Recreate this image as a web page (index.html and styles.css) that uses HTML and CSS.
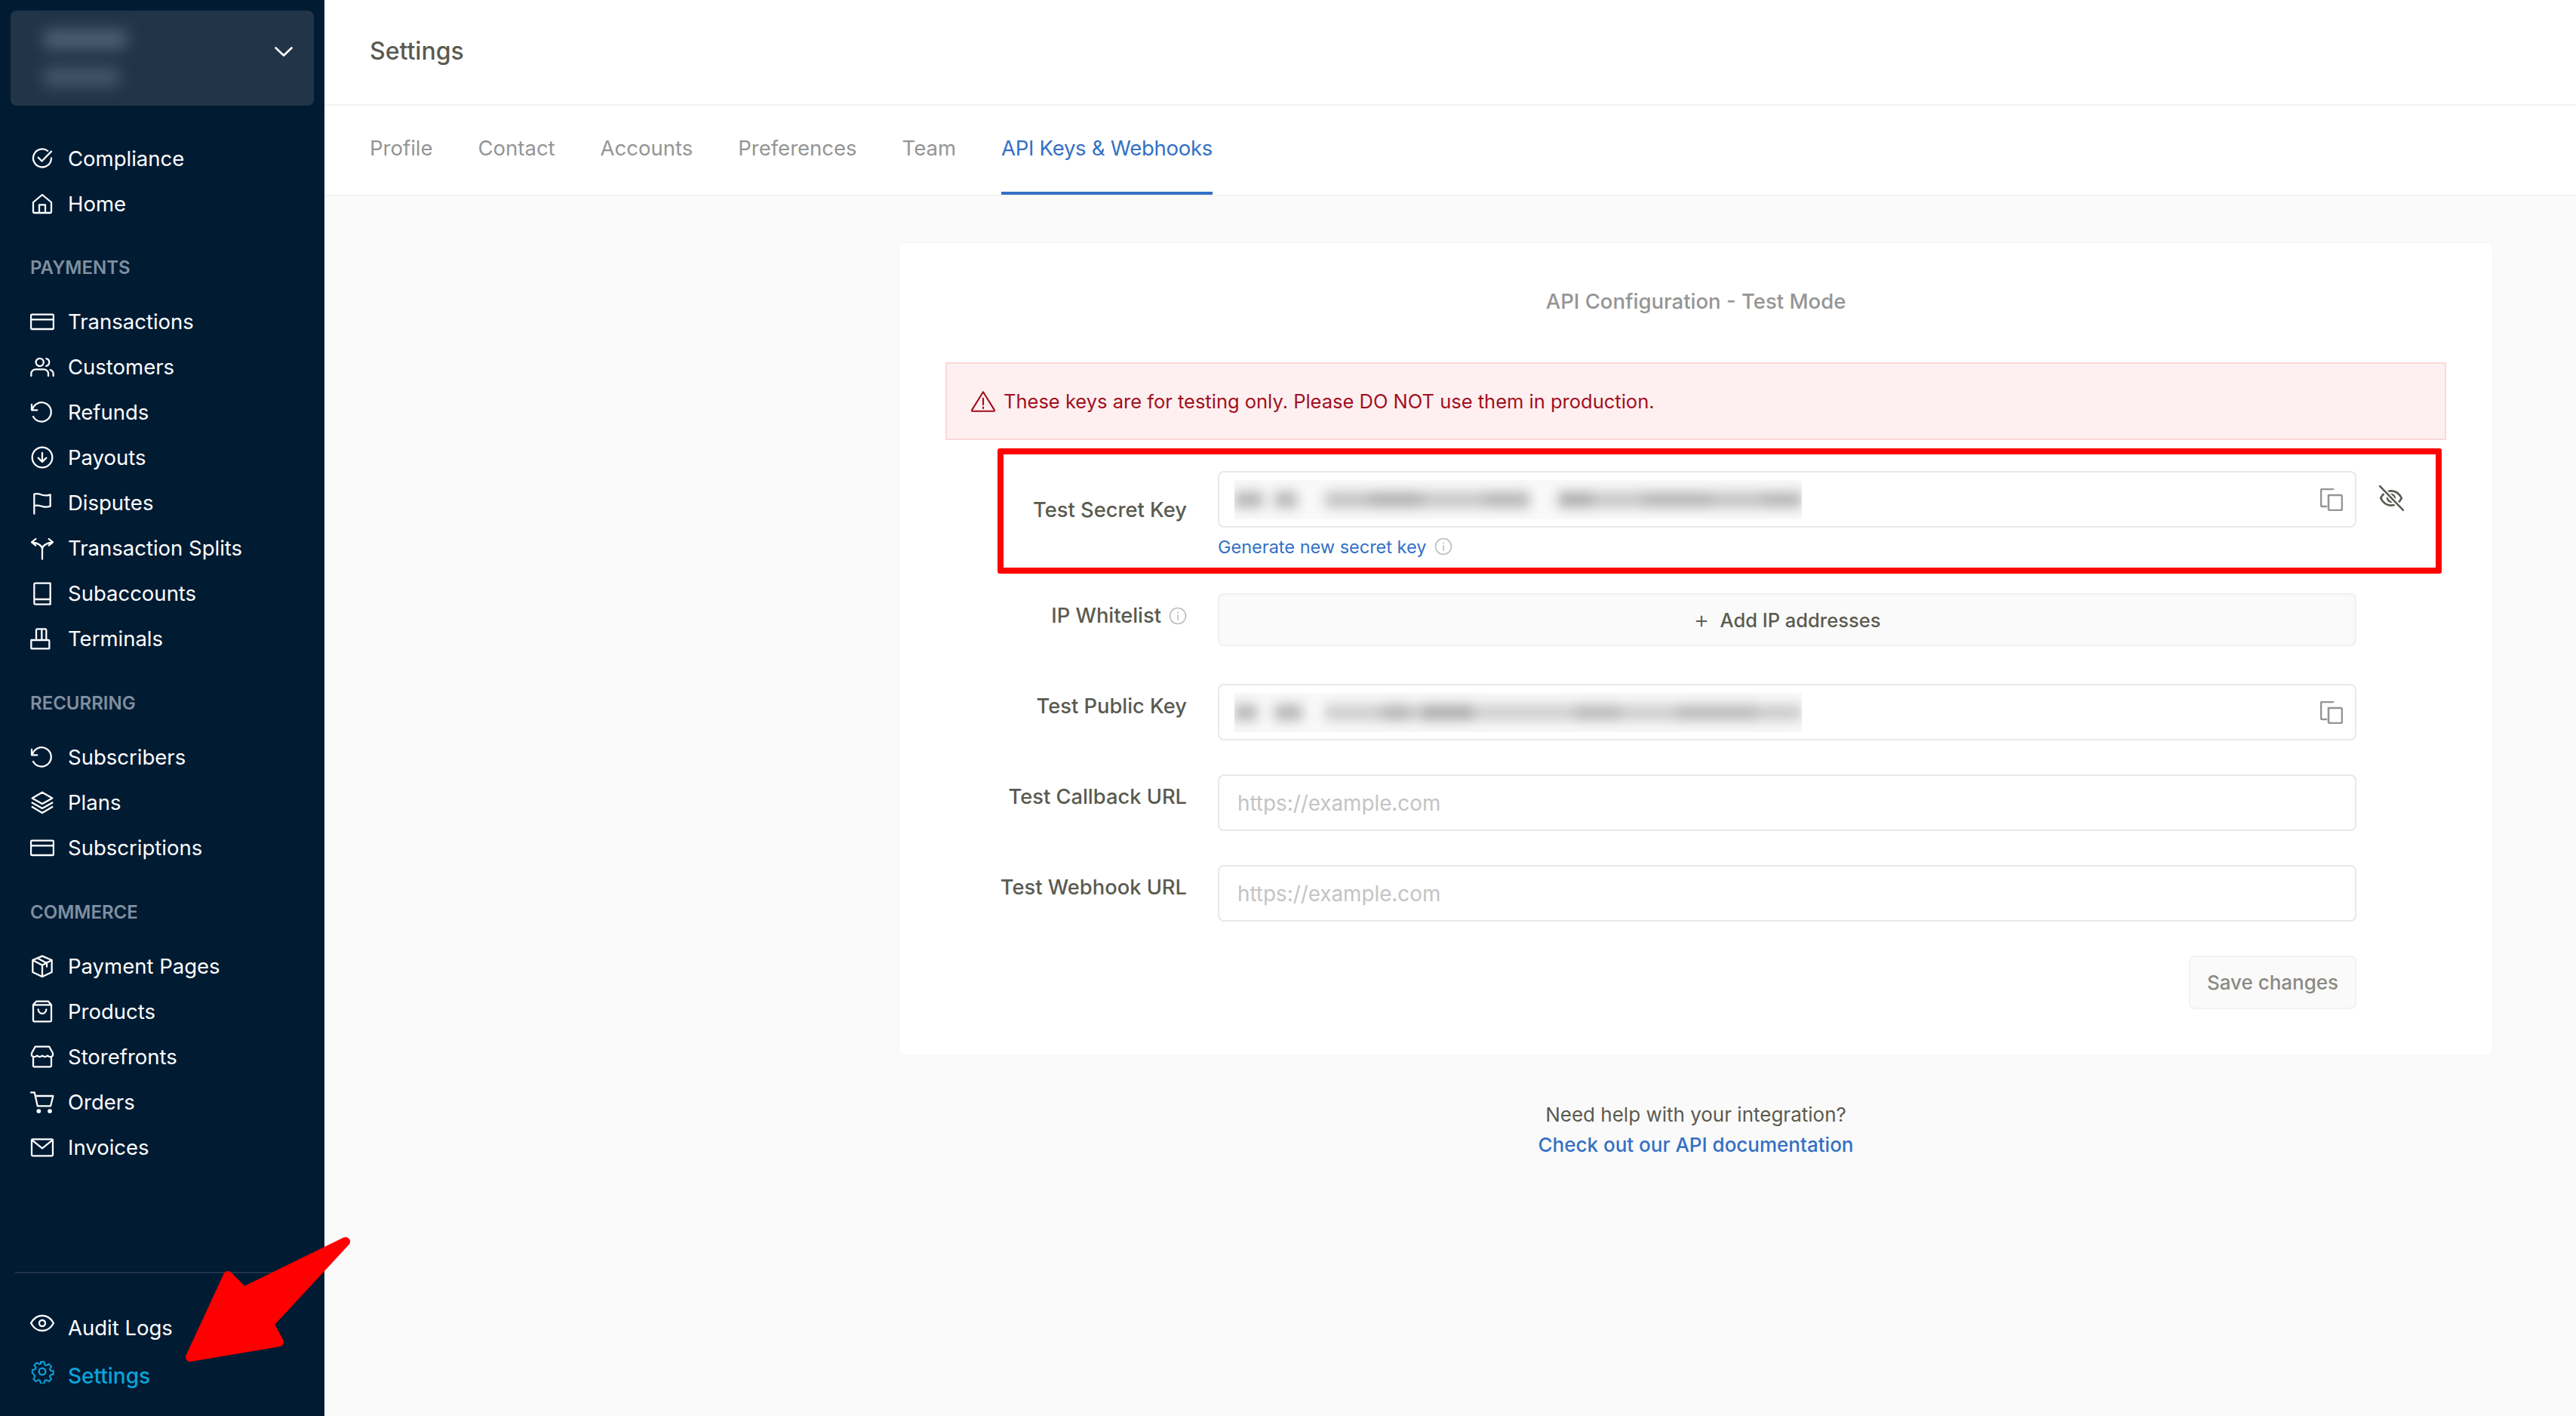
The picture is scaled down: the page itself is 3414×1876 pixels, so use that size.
FILE: index.html
```html
<!DOCTYPE html>
<html lang="en">
<head>
<meta charset="utf-8">
<title>Settings</title>
<link rel="stylesheet" href="styles.css">
</head>
<body>
<div class="app">
  <aside class="sidebar">
    <div class="switcher">
      <div class="switcher-blur"><span class="sb sb-a"></span><span class="sb sb-b"></span></div>
      <svg class="chev" viewBox="0 0 24 14"><path d="M1.5 1.5 12 11.5 22.5 1.5"/></svg>
    </div>
    <nav class="nav nav-first">
      <a class="item"><svg class="ico" viewBox="0 0 24 24"><path d="M21 11.6a9 9 0 1 1-3.6-7.2M8 11l3.6 3.6L21 5"/></svg>Compliance</a>
      <a class="item"><svg class="ico" viewBox="0 0 24 24"><path d="M3 10.5 12 3l9 7.5V20a1 1 0 0 1-1 1H4a1 1 0 0 1-1-1zM9 21v-8h6v8"/></svg>Home</a>
    </nav>
    <div class="section">PAYMENTS</div>
    <nav class="nav">
      <a class="item"><svg class="ico" viewBox="0 0 24 24"><rect x="0.8" y="5" width="22.4" height="14.500" rx="1"/><path d="M1 10h22"/></svg>Transactions</a>
      <a class="item"><svg class="ico" viewBox="0 0 24 24"><circle cx="9.500" cy="7.500" r="3.800"/><path d="M1 21v-2c0-2.600 2-4.500 4.500-4.500h8c2.500 0 4.500 1.900 4.500 4.500v2M16 3.800a3.800 3.800 0 0 1 0 7.400M20 15c1.800.6 3 2.200 3 4.200V21"/></svg>Customers</a>
      <a class="item"><svg class="ico" viewBox="0 0 24 24"><path d="M1.500 4.500v5.500h5.500M2 10a9.500 9.500 0 1 1 1 6.500"/></svg>Refunds</a>
      <a class="item"><svg class="ico" viewBox="0 0 24 24"><circle cx="12" cy="12" r="10"/><path d="M12 7.500v9M8 12.500l4 4 4-4"/></svg>Payouts</a>
      <a class="item"><svg class="ico" viewBox="0 0 24 24"><path d="M4 23V3.500c3-1 5.500 0 8 .8s5 .8 8-.3v11.500c-3 1.100-5.500 1-8 .2s-5-1.700-8-.7"/></svg>Disputes</a>
      <a class="item"><svg class="ico" viewBox="0 0 24 24"><path d="M12 23V13c0-3-4-6-9.500-6.500M12 13c0-3 4-6 9.500-6.500M5.500 3 1.500 6.300l4 3.200M18.500 3l4 3.300-4 3.200"/></svg>Transaction Splits</a>
      <a class="item"><svg class="ico" viewBox="0 0 24 24"><path d="M4 19.500V3a1 1 0 0 1 1-1h15v21H5a1 1 0 0 1-1-1zm0-1.500h16"/></svg>Subaccounts</a>
      <a class="item"><svg class="ico" viewBox="0 0 24 24"><path d="M1 13.500h17a1 1 0 0 1 1 1V22H1.500a.5.5 0 0 1-.5-.5v-7a1 1 0 0 1 1-1M6 13.500V3.500a1 1 0 0 1 1-1h8a1 1 0 0 1 1 1v10M11.500 2.500v11"/></svg>Terminals</a>
    </nav>
    <div class="section">RECURRING</div>
    <nav class="nav">
      <a class="item"><svg class="ico" viewBox="0 0 24 24"><path d="M1.500 4.500v5.500h5.500M2 10a9.500 9.500 0 1 1 1 6.500"/></svg>Subscribers</a>
      <a class="item"><svg class="ico" viewBox="0 0 24 24"><path d="M12 2 2 7.800l10 5.700 10-5.700zM2 12.300l10 5.700 10-5.700M2 16.500 12 22.500l10-6"/></svg>Plans</a>
      <a class="item"><svg class="ico" viewBox="0 0 24 24"><rect x="0.800" y="5" width="22.400" height="14.500" rx="1"/><path d="M1 10h22"/></svg>Subscriptions</a>
    </nav>
    <div class="section">COMMERCE</div>
    <nav class="nav">
      <a class="item"><svg class="ico" viewBox="0 0 24 24"><path d="M12 2 2.500 6v12L12 22.500l9.500-4.500V6zM2.500 6 12 11l9.500-5M12 11v11.500M7 4l9.500 5v3.500"/></svg>Payment Pages</a>
      <a class="item"><svg class="ico" viewBox="0 0 24 24"><path d="M6 2h12l3 3.500V21a1 1 0 0 1-1 1H4a1 1 0 0 1-1-1V5.500zM3 5.500h18M8 10c.5 5.500 7.500 5.500 8 0"/></svg>Products</a>
      <a class="item"><svg class="ico" viewBox="0 0 24 24"><path d="M5 2h14l3.500 6.500V11c-1.800 1.500-3.500 1.500-5.300 0-1.800 1.500-3.500 1.500-5.200 0-1.800 1.500-3.500 1.500-5.200 0-1.800 1.500-3.500 1.500-5.300 0V8.500zM3 12.500V21a1 1 0 0 0 1 1h16a1 1 0 0 0 1-1v-8.500"/></svg>Storefronts</a>
      <a class="item"><svg class="ico" viewBox="0 0 24 24"><path d="M.8 2.500h3.500l3 13.500h13l2.500-10H5.200"/><circle cx="8.500" cy="21" r="1.300" class="dot"/><circle cx="19.500" cy="21" r="1.300" class="dot"/></svg>Orders</a>
      <a class="item"><svg class="ico" viewBox="0 0 24 24"><rect x="1.500" y="4" width="21" height="16.500" rx="1"/><path d="m2 5 10 8 10-8"/></svg>Invoices</a>
    </nav>
    <div class="foot">
      <a class="item item-foot"><svg class="ico ico-up" viewBox="0 0 24 24"><path d="M.8 12C3.500 7 7.500 4.500 12 4.500S20.500 7 23.200 12c-2.700 5-6.700 7.500-11.200 7.500S3.500 17 .8 12z"/><circle cx="12" cy="12" r="3"/></svg>Audit Logs</a>
      <a class="item item-foot item-active"><svg class="ico ico-up" viewBox="0 0 24 24"><circle cx="12" cy="12" r="3.300"/><path d="M10 1h4l.7 3.300 1.700.8 3-1.700 2.800 2.800-1.800 2.900.8 1.800 3.300.7v3.600l-3.300.8-.8 1.700 1.800 2.900-2.800 2.800-3-1.800-1.700.8-.7 3.300h-4l-.7-3.300-1.700-.8-3 1.800-2.800-2.800 1.800-2.900-.8-1.700L.500 13.800v-3.600l3.300-.7.8-1.800-1.800-2.900 2.800-2.800 3 1.700 1.700-.8z" transform="translate(1.700 1.600) scale(.87)"/></svg>Settings</a>
    </div>
  </aside>

  <main class="main">
    <header class="topbar">Settings</header>
    <div class="tabs">
      <a class="tab">Profile</a>
      <a class="tab">Contact</a>
      <a class="tab">Accounts</a>
      <a class="tab">Preferences</a>
      <a class="tab">Team</a>
      <a class="tab tab-active">API Keys &amp; Webhooks</a>
    </div>
    <div class="content">
      <section class="card">
        <h2 class="card-title">API Configuration - Test Mode</h2>
        <div class="alert">
          <svg class="alert-ico" viewBox="0 0 32 28"><path d="M16 2 2 24.500a1 1 0 0 0 1 1.500h26a1 1 0 0 0 1-1.500zM16 10v8M16 21v1.500"/></svg>
          <span>These keys are for testing only. Please DO NOT use them in production.</span>
        </div>
        <div class="row">
          <label class="label label-low">Test Secret Key</label>
          <div>
            <div class="field">
              <div class="key"><div class="ink ink-secret"></div></div>
              <svg class="copy" viewBox="0 0 30 30"><path d="M8 24H3a2 2 0 0 1-2-2V3a2 2 0 0 1 2-2h14M11 9h16a2 2 0 0 1 2 2v16a2 2 0 0 1-2 2H13a2 2 0 0 1-2-2z"/></svg>
            </div>
            <div class="gen"><a class="gen-link">Generate new secret key</a><svg class="info" viewBox="0 0 24 24"><circle cx="12" cy="12" r="10.500"/><path d="M12 11v6.500M12 7v1"/></svg></div>
          </div>
          <svg class="eye-off" viewBox="0 0 32 32"><path d="M3 16c3-6 8-9 13-9s10 3 13 9c-3 6-8 9-13 9S6 22 3 16z"/><circle cx="16" cy="16" r="4.500"/><path d="M2 1l29 30" class="halo"/><path d="M2 1l29 30" class="slash"/></svg>
        </div>
        <div class="row row-ip">
          <label class="label">IP Whitelist<svg class="info info-label" viewBox="0 0 24 24"><circle cx="12" cy="12" r="10.500"/><path d="M12 11v6.500M12 7v1"/></svg></label>
          <div class="field field-add"><span class="plus">+</span>Add IP addresses</div>
        </div>
        <div class="row">
          <label class="label">Test Public Key</label>
          <div class="field">
            <div class="key"><div class="ink ink-public"></div></div>
            <svg class="copy" viewBox="0 0 30 30"><path d="M8 24H3a2 2 0 0 1-2-2V3a2 2 0 0 1 2-2h14M11 9h16a2 2 0 0 1 2 2v16a2 2 0 0 1-2 2H13a2 2 0 0 1-2-2z"/></svg>
          </div>
        </div>
        <div class="row">
          <label class="label">Test Callback URL</label>
          <div class="field field-url">https://example.com</div>
        </div>
        <div class="row row-last">
          <label class="label">Test Webhook URL</label>
          <div class="field field-url">https://example.com</div>
        </div>
        <div class="row row-save">
          <span></span>
          <button class="save">Save changes</button>
        </div>
      </section>
      <div class="help">
        <p class="help-q">Need help with your integration?</p>
        <a class="help-link">Check out our API documentation</a>
      </div>
    </div>
  </main>
</div>
<div class="redbox"></div>
<svg class="arrow" viewBox="0 0 240 190"><path d="M12 166 62 58 83 79 218 13 117 122 130 146z"/></svg>
</body>
</html>
```
FILE: styles.css
```css
* { box-sizing: border-box; }
html, body { margin: 0; height: 100%; }
body { font-family: Inter, "Liberation Sans", sans-serif; color: #5a5a50; background: #fafafa; position: relative; overflow: hidden; }
a { text-decoration: none; display: block; }

.app { display: flex; height: 1876px; }

.sidebar { width: 430px; flex: none; background: #011b33; display: flex; flex-direction: column; color: #fff; }
.switcher { margin: 14px 14px 0; height: 126px; background: #213448; border-radius: 8px; display: flex; align-items: center; justify-content: flex-end; padding: 0 28px 16px 0; position: relative; overflow: hidden; }
.switcher-blur { position: absolute; left: 20px; top: 12px; width: 170px; height: 100px; filter: blur(10px); display: flex; flex-direction: column; gap: 26px; padding: 14px 0 0 24px; }
.sb { display: block; height: 24px; background: #506375; }
.sb-a { width: 110px; }
.sb-b { width: 100px; background: #46596c; }
.chev { width: 24px; height: 14px; fill: none; stroke: #fff; stroke-width: 2.6; stroke-linecap: round; stroke-linejoin: round; }

.nav { display: flex; flex-direction: column; padding-left: 40px; }
.nav-first { margin-top: 40px; }
.item { height: 60px; display: flex; align-items: center; gap: 18px; font-size: 27.5px; color: #fff; }
.ico { width: 32px; height: 32px; flex: none; fill: none; stroke: currentColor; stroke-width: 1.7; stroke-linecap: round; stroke-linejoin: round; }
.dot { fill: currentColor; }
.section { margin: 40px 0 26px 40px; height: 30px; line-height: 30px; font-size: 24px; font-weight: 600; color: #7f8f9f; }
.section + .nav + .section { margin-top: 41px; }

.foot { margin: auto 20px 0; border-top: 2px solid #213448; padding: 40px 0 21px 20px; }
.item-foot { height: 64px; }
.ico-up { margin-top: -12px; }
.item-active { color: #0ba4db; font-weight: 500; font-size: 28px; }

.main { flex: 1; display: flex; flex-direction: column; min-width: 0; }
.topbar { height: 140px; background: #fff; border-bottom: 2px solid #f4f4f4; padding: 48px 0 0 60px; font-size: 32px; line-height: 40px; font-weight: 500; }
.tabs { height: 120px; background: #fff; border-bottom: 2px solid #f4f4f4; display: flex; gap: 60px; padding-left: 60px; }
.tab { height: 118px; padding-top: 37px; font-size: 27.5px; line-height: 38px; color: #959595; }
.tab-active { color: #3470c5; border-bottom: 4px solid #3470c5; letter-spacing: -0.27px; }

.content { flex: 1; padding: 62px 111px 0 762px; background: #fafafa; }
.card { background: #fff; border-radius: 8px; box-shadow: 0 0 4px rgba(0, 0, 0, .03); padding: 58px 61px 61px; }
.card-title { margin: 0 0 62px; text-align: center; font-size: 27.5px; line-height: 38px; font-weight: 500; color: #959595; }
.alert { height: 103px; background: #fef0f0; border: 2px solid #fdd8d8; padding-left: 31px; display: flex; align-items: center; gap: 10px; font-size: 25.5px; color: #a10f1f; margin-bottom: 41px; }
.alert-ico { width: 34px; height: 30px; flex: none; fill: none; stroke: currentColor; stroke-width: 2; stroke-linecap: round; stroke-linejoin: round; }

.row { display: grid; grid-template-columns: 361px 1509px auto; margin-bottom: 45px; align-items: start; }
.row-ip { margin-bottom: 50px; }
.row-last { margin-bottom: 45px; }
.label { padding: 11px 41px 0 0; font-size: 27.3px; line-height: 38px; font-weight: 500; text-align: right; color: #5a5a50; }
.label-low { padding-top: 33px; }
.field { height: 75px; border: 2px solid #e8e8e8; border-radius: 8px; background: #fff; display: flex; align-items: center; padding: 0 16px 0 20px; }
.key { width: 752px; height: 52px; background: #f9f9f9; overflow: hidden; display: flex; align-items: center; margin-right: auto; }
.ink { width: 100%; height: 22px; filter: blur(8px); }
.ink-secret { background: linear-gradient(90deg, #b8b8b8 0 5%, transparent 5% 7%, #b8b8b8 7% 11%, transparent 11% 16%, #c4c4c4 16% 24%, #b4b4b4 24% 33%, #c8c8c8 33% 44%, #b8b8b8 44% 52%, transparent 52% 57%, #b0b0b0 57% 63%, #c8c8c8 63% 72%, #b8b8b8 72% 84%, #c4c4c4 84% 93%, #b8b8b8 93% 100%); }
.ink-public { background: linear-gradient(90deg, #b8b8b8 0 4%, transparent 4% 7%, #b8b8b8 7% 12%, transparent 12% 16%, #cecece 16% 26%, #b8b8b8 26% 31%, #d0d0d0 31% 33%, #b0b0b0 33% 42%, #d0d0d0 42% 60%, #bcbcbc 60% 68%, #cecece 68% 78%, #bcbcbc 78% 92%, #cccccc 92% 100%); }
.copy { width: 30px; height: 30px; flex: none; fill: none; stroke: #959595; stroke-width: 2.6; stroke-linecap: round; stroke-linejoin: round; }
.gen { display: flex; align-items: center; gap: 11px; height: 34px; margin-top: 8px; }
.gen-link { font-size: 23.5px; color: #3470c5; }
.info { width: 24px; height: 24px; flex: none; fill: none; stroke: #bdbdbd; stroke-width: 1.6; stroke-linecap: round; }
.info-label { margin-left: 10px; vertical-align: -3px; }
.eye-off { width: 34px; height: 34px; margin: 19px 0 0 29px; fill: none; stroke: #5a5a50; stroke-width: 2.6; stroke-linecap: round; }
.halo { stroke: #fff; stroke-width: 6; }
.slash { stroke-width: 2.4; }
.field-add { height: 70px; background: #fafafa; border-color: #f0f0f0; justify-content: center; font-size: 25.5px; font-weight: 500; padding: 0; }
.plus { font-size: 32px; font-weight: 300; margin-right: 14px; line-height: 1; }
.field-url { font-size: 27.8px; color: #c4c4c4; padding: 0 0 0 24px; }
.row-save { margin: 0; }
.save { justify-self: end; width: 222px; height: 71px; background: #fafafa; border: 2px solid #f2f2f2; border-radius: 8px; font: 500 26px Inter, "Liberation Sans", sans-serif; color: #8a8a85; padding: 0; }

.help { margin-top: 60px; text-align: center; }
.help-q { margin: 0; font-size: 26px; line-height: 38px; color: #5a5a50; }
.help-link { font-size: 26px; line-height: 42px; font-weight: 500; color: #3470c5; }

.redbox { position: absolute; left: 1322px; top: 594px; width: 1914px; height: 166px; border: 8px solid #f00; border-radius: 3px; }
.arrow { position: absolute; left: 240px; top: 1632px; width: 240px; height: 190px; fill: #f00; stroke: #f00; stroke-width: 12; stroke-linejoin: round; }
```
